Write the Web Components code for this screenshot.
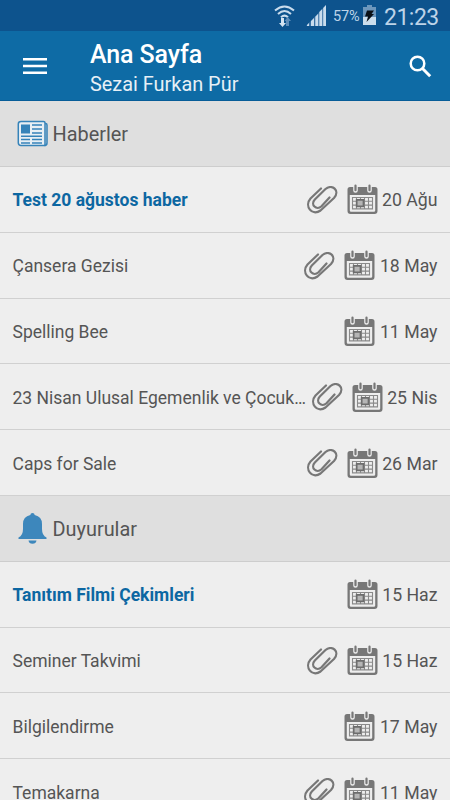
<!DOCTYPE html>
<html lang="tr">
<head>
<meta charset="utf-8">
<title>Ana Sayfa</title>
<style>
  body {
    margin: 0;
    height: 800px;
    overflow: hidden;
    background: #eee;
    color: #555;
    font-family: Roboto, "Noto Sans", sans-serif;
  }
</style>
</head>
<body>

<template id="status-tpl">
  <style>
    :host {
      display: flex;
      align-items: center;
      justify-content: flex-end;
      box-sizing: border-box;
      height: 31px;
      padding: 0 11px 0 0;
      background: #0d538d;
      color: #bdd3e8;
    }
    svg { display: block; flex: none; }
    .wifi { margin: 0 11px 2px 0; }
    .signal { margin-right: 7px; }
    .percent { width: 27px; font-size: 14.500px; letter-spacing: -.2px; white-space: nowrap; padding-top: 2px; }
    .battery { margin: 0 8px 1px 3px; }
    .clock { width: 55px; font-size: 23px; line-height: 31px; letter-spacing: -.5px; white-space: nowrap; padding-top: 3px; }
  </style>
  <svg class="wifi" width="21" height="24" viewBox="0 0 21 24">
    <g fill="none" stroke="#c9dced" stroke-width="2">
      <path d="M1 7.500Q10.500-.5 20 7.500"/>
      <path d="M4 11Q10.500 5 17 11"/>
      <path d="M7 14.300Q10.500 11 14 14.300"/>
    </g>
    <path fill="#d6e4f1" d="M7 15h3v5h2l-3.500 4L5 20h2z"/>
    <path fill="#5e8db9" d="M12 23v-5h-1.500l3.300-4 3.200 4h-2v5z"/>
  </svg>
  <svg class="signal" width="20" height="21" viewBox="0 0 20 21">
    <path fill="#3a72a5" d="M0 21 20 0v21z"/>
    <path fill="#c9dced" d="M1 21v-1l2-2v3zM5 21v-5l3-3v8zM9.300 21v-9.300l2.900-3V21zM13.300 21V7l2.900-3v17zM17.200 21V3L20 0v21z"/>
  </svg>
  <span class="percent">57%</span>
  <svg class="battery" width="13" height="20" viewBox="0 0 13 20">
    <path fill="#6d97bd" d="M4 0h5v2h4v11H0V2h4z"/>
    <path fill="#ccdeed" d="M0 12h13v8H0z"/>
    <path fill="#0b1016" d="M4 5.500h7L8.500 9H11l-7.500 8 1.500-5.500H2z"/>
  </svg>
  <span class="clock">21:23</span>
</template>

<template id="bar-tpl">
  <style>
    :host {
      display: flex;
      align-items: center;
      box-sizing: border-box;
      height: 70.3px;
      padding: 2px 18.500px 0 23px;
      background: #0e6ba5;
      color: #fff;
      border-bottom: 1px solid #075d98;
    }
    svg { display: block; flex: none; }
    .titles { flex: 1; margin-left: 43px; }
    .title { font-size: 25px; line-height: 30px; font-weight: 500; padding-top: 6px; letter-spacing: -.1px; }
    .subtitle { font-size: 19.900px; line-height: 30px; color: #e7f0f6; }
  </style>
  <svg width="24" height="17" viewBox="0 0 24 17">
    <path fill="#fff" d="M0 0h24v2.500H0zM0 6.700h24v2.500H0zM0 13.400h24v2.500H0z"/>
  </svg>
  <div class="titles">
    <div class="title"><slot></slot></div>
    <div class="subtitle"><slot name="subtitle"></slot></div>
  </div>
  <svg width="23" height="23" viewBox="0 0 23 23" fill="none" stroke="#fff">
    <circle cx="8.500" cy="8.500" r="6.800" stroke-width="2.500"/>
    <path d="M13.500 13.500l7.700 7.700" stroke-width="3"/>
  </svg>
</template>

<template id="section-tpl">
  <style>
    :host { display: block; }
    header {
      display: flex;
      align-items: center;
      box-sizing: border-box;
      height: 65.8px;
      padding-left: 17px;
      gap: 4.500px;
      background: #dfdfdf;
      border-bottom: 1px solid #cdcdcd;
      font-size: 19.900px;
    }
    header span { padding-top: 2px; }
    svg { display: none; flex: none; }
    :host([icon="news"]) .news,
    :host([icon="bell"]) .bell { display: block; }
  </style>
  <header>
    <svg class="news" width="31" height="27" viewBox="0 0 31 27" fill="none" stroke="#3583b9">
      <path fill="#e8eff4" stroke-width="1.500" d="M4 1.500h22.500q1.500 0 1.500 1.500v22.500H4q-2.700 0-2.700-2.700V4Q1.300 1.500 4 1.500z"/>
      <path stroke-width="1.500" d="M28 3.500h.5q1.500 0 1.500 1.500v18q0 2.500-2.500 2.500"/>
      <path fill="#3583b9" stroke="none" d="M4 4.500h9v9H4z"/>
      <path stroke-width="1.500" d="M15 5h10M15 9h10M15 13h10M4 16.300h21M4 19.500h9M15 19.500h10M4 23h9M15 23h10"/>
    </svg>
    <svg class="bell" width="31" height="31" viewBox="0 0 31 31">
      <path fill="#3d87bc" d="M15.500 0q2 0 2.200 2 7.300 1.500 7.300 9v5q0 6.500 4.500 8.500v1.500h-28v-1.500Q6 22.500 6 16v-5q0-7.500 7.300-9 .2-2 2.200-2zM11.500 27.500h8q-.6 3.300-4 3.300t-4-3.300z"/>
    </svg>
    <span><slot name="heading"></slot></span>
  </header>
  <slot></slot>
</template>

<template id="row-tpl">
  <style>
    :host {
      display: flex;
      align-items: center;
      box-sizing: border-box;
      height: 65.8px;
      padding: 2px 12.500px 0;
      border-bottom: 1px solid #d0d0d0;
      font-size: 17.500px;
    }
    .name {
      flex: 1;
      min-width: 0;
      white-space: nowrap;
    }
    :host([unread]) .name { color: #0c67a2; font-weight: 700; }
    svg { display: block; flex: none; margin-bottom: 1px; }
    .clip { display: none; margin-right: 9px; }
    :host([attachment]) .clip { display: block; }
    .date { margin-left: 4.500px; font-size: 17.700px; white-space: nowrap; }
  </style>
  <span class="name"><slot></slot></span>
  <svg class="clip" width="31" height="28" viewBox="0 0 31 28" fill="none" stroke="#777" stroke-width="2.200" stroke-linecap="round" stroke-linejoin="round">
    <path d="M14 2.500 3.500 12.500C-3 20 5 30.500 13.500 24.500L27 12C33.500 4.500 25-2.500 18.500 3L7.800 13.500C3 18.800 9.500 24.800 14.500 20.300L22.500 11.500"/>
  </svg>
  <svg width="31" height="31" viewBox="0 0 31 31">
    <path fill="#777" fill-rule="evenodd" d="M3 3h25q2.500 0 2.500 2.500V27q0 3-3 3h-24q-3 0-3-3V5.500Q.5 3 3 3zM2.800 11v15.500q0 1.300 1.300 1.300h22.800q1.300 0 1.300-1.300V11z"/>
    <path stroke="#eee" stroke-width="4.600" stroke-linecap="round" d="M8.500 2v4.500M22.500 2v4.500"/>
    <path stroke="#777" stroke-width="2.200" stroke-linecap="round" d="M8.500 1.500v4.700M22.500 1.500v4.700"/>
    <path fill="none" stroke="#8a8a8a" stroke-width="1.100" d="M5.500 13.500h20v11.400h-20zM5.500 17.300h20M5.500 21.100h20M9.500 13.500v11.400M13.500 13.500v11.400M17.500 13.500v11.400M21.500 13.500v11.400"/>
    <path fill="#b5b5b5" stroke="#6d6d6d" stroke-width="1.700" d="M9.700 15.900h6.800v6.400H9.700z"/>
  </svg>
  <span class="date"><slot name="date"></slot></span>
</template>

<status-bar></status-bar>
<app-bar>Ana Sayfa<span slot="subtitle">Sezai Furkan Pür</span></app-bar>

<list-section icon="news">
  <span slot="heading">Haberler</span>
  <list-row unread attachment>Test 20 ağustos haber<span slot="date">20 Ağu</span></list-row>
  <list-row attachment>Çansera Gezisi<span slot="date">18 May</span></list-row>
  <list-row>Spelling Bee<span slot="date">11 May</span></list-row>
  <list-row attachment>23 Nisan Ulusal Egemenlik ve Çocuk…<span slot="date">25 Nis</span></list-row>
  <list-row attachment>Caps for Sale<span slot="date">26 Mar</span></list-row>
</list-section>

<list-section icon="bell">
  <span slot="heading">Duyurular</span>
  <list-row unread>Tanıtım Filmi Çekimleri<span slot="date">15 Haz</span></list-row>
  <list-row attachment>Seminer Takvimi<span slot="date">15 Haz</span></list-row>
  <list-row>Bilgilendirme<span slot="date">17 May</span></list-row>
  <list-row attachment>Temakarna<span slot="date">11 May</span></list-row>
</list-section>

<script>
  class TemplateElement extends HTMLElement {
    constructor() {
      super();
      let template = document.querySelector(this.constructor.template);
      let shadow = this.attachShadow({ mode: 'open' });
      shadow.appendChild(document.importNode(template.content, true));
    }
  }

  class StatusBar extends TemplateElement {
    static get template() { return '#status-tpl'; }
  }

  class AppBar extends TemplateElement {
    static get template() { return '#bar-tpl'; }
  }

  class ListSection extends TemplateElement {
    static get template() { return '#section-tpl'; }
  }

  class ListRow extends TemplateElement {
    static get template() { return '#row-tpl'; }
  }

  customElements.define('status-bar', StatusBar);
  customElements.define('app-bar', AppBar);
  customElements.define('list-section', ListSection);
  customElements.define('list-row', ListRow);
</script>
</body>
</html>
